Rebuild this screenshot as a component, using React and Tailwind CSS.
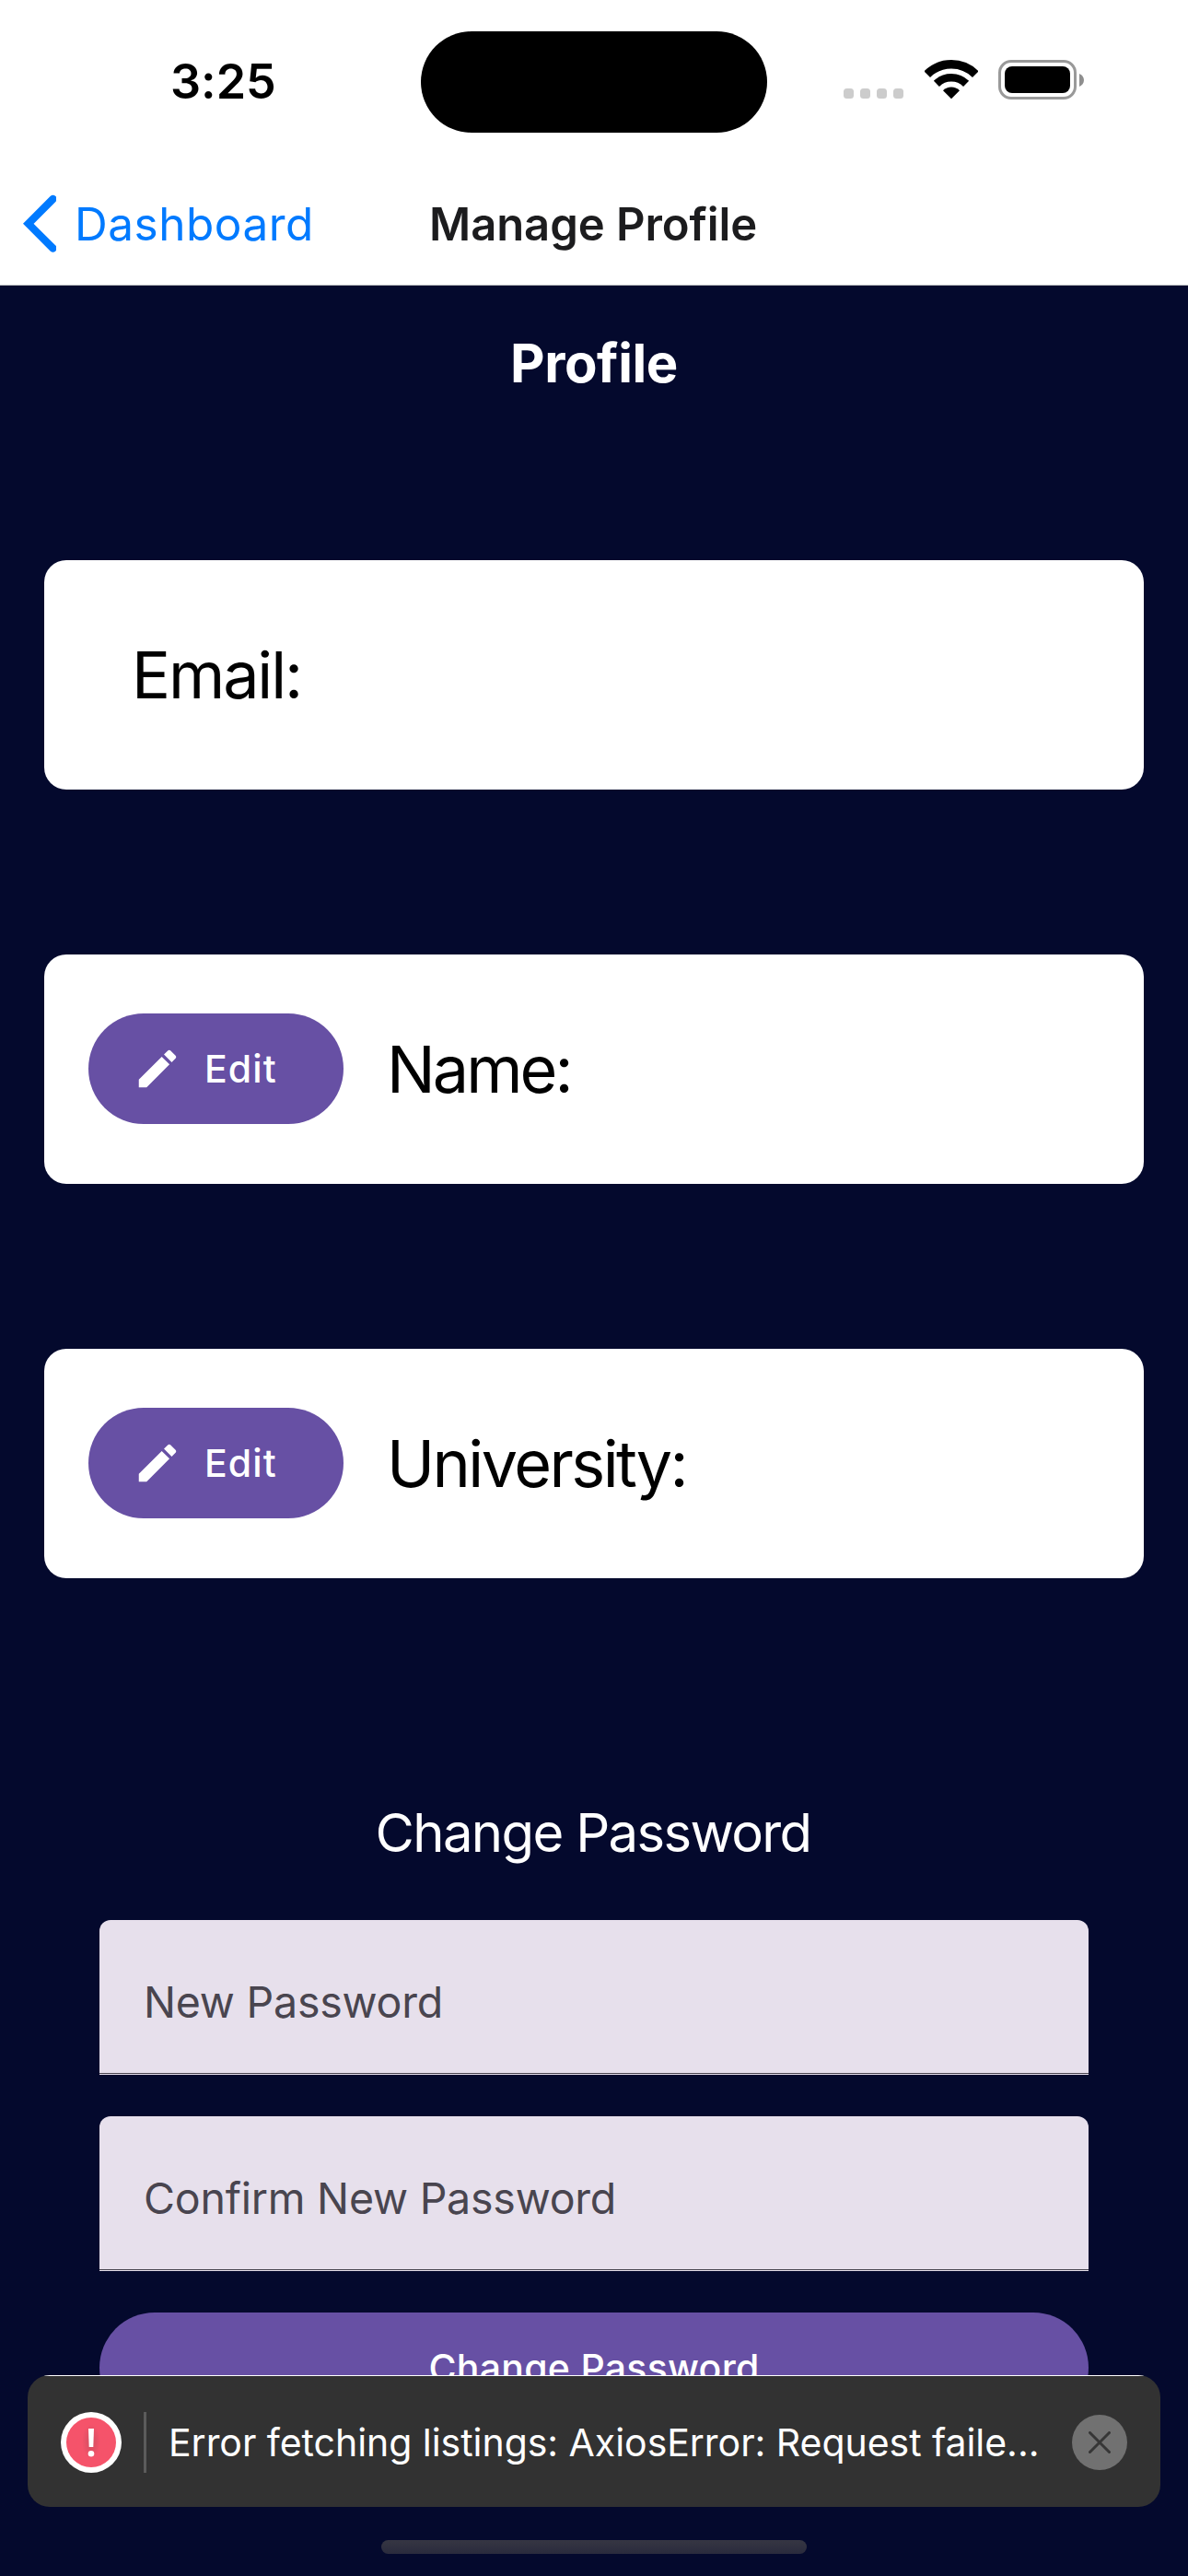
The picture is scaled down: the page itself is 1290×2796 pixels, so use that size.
function CellularDots() {
  return (
    <div className="mt-[26px] flex gap-[7px]">
      {[0, 1, 2, 3].map((i) => (
        <span key={i} className="size-[11px] rounded-[3.5px] bg-[#cccccc]" />
      ))}
    </div>
  );
}

function WifiIcon() {
  return (
    <svg width="58" height="43" viewBox="0 0 58 43" fill="none" className="ml-[23px] -mt-[4px]">
      <path d="M2.7 15.7A37.2 37.2 0 0 1 55.3 15.7" stroke="#000" strokeWidth="9.4" />
      <path d="M12.9 25.9A22.8 22.8 0 0 1 45.1 25.9" stroke="#000" strokeWidth="8.6" />
      <path d="M29 42.2L20 33.2A13 13 0 0 1 38 33.2Z" fill="#000" />
    </svg>
  );
}

function BatteryIcon() {
  return (
    <div className="ml-[22px] -mt-[4px] flex items-center gap-[3px]">
      <div className="h-[43px] w-[85px] rounded-[14px] border-[3px] border-[#999999] p-[4px]">
        <div className="h-full w-full rounded-[8px] bg-black" />
      </div>
      <svg width="5" height="14" viewBox="0 0 5 14">
        <path d="M0 0C3 1.2 5 3.8 5 7S3 12.8 0 14Z" fill="#8e8e8e" />
      </svg>
    </div>
  );
}

function StatusBar() {
  return (
    <div className="flex h-[177px] items-center">
      <div className="w-[457px] pl-[185px] text-[52px] font-semibold leading-none text-black">3:25</div>
      <div className="mt-px h-[110px] w-[376px] rounded-full bg-black" />
      <div className="ml-[83px] flex items-center">
        <CellularDots />
        <WifiIcon />
        <BatteryIcon />
      </div>
    </div>
  );
}

function NavBar() {
  return (
    <div className="flex h-[133px] items-center border-b border-[#b9bcc0]">
      <div className="flex w-[466px] items-center pl-[24px] text-[#007aff]">
        <svg width="37" height="64" viewBox="0 0 37 64" fill="none">
          <path d="M33.5 5L6.8 31.8L33.5 58.5" stroke="currentColor" strokeWidth="8.2" strokeLinecap="round" strokeLinejoin="miter" />
        </svg>
        <span className="ml-[20px] mt-[2px] text-[49.5px] leading-none tracking-[0.5px]">Dashboard</span>
      </div>
      <h1 className="text-[49px] font-semibold leading-none tracking-[-0.07px] text-[#1c1c1e]">Manage Profile</h1>
    </div>
  );
}

function EditButton() {
  return (
    <button className="mb-px flex h-[120px] w-[277px] items-center rounded-full bg-[#6750a4] pl-[48px] text-white">
      <svg width="54" height="54" viewBox="0 0 24 24" fill="currentColor">
        <path d="M20.71 7.04C21.1 6.65 21.1 6 20.71 5.63L18.37 3.29C18 2.9 17.35 2.9 16.96 3.29L15.12 5.12L18.87 8.87M3 17.25V21H6.75L17.81 9.93L14.06 6.18L3 17.25Z" />
      </svg>
      <span className="ml-[24px] text-[41px] font-medium leading-none tracking-[1.1px]">Edit</span>
    </button>
  );
}

function ProfileCard({ label, editable, labelClass }) {
  return (
    <div className="flex h-[249px] items-center rounded-[24px] bg-white px-[48px]">
      {editable && <EditButton />}
      <span className={`text-[70px] leading-none text-black ${labelClass}`}>{label}</span>
    </div>
  );
}

function PasswordField({ label }) {
  return (
    <div className="flex h-[168px] flex-col rounded-t-[12px] bg-[#e7e0ec]">
      <div className="flex flex-1 items-center pl-[48px] pt-[13px] text-[46.5px] leading-none tracking-[-0.22px] text-[#49454f]">
        {label}
      </div>
      <div className="mb-px h-px bg-[#49454f]" />
    </div>
  );
}

function Toast() {
  return (
    <div className="absolute left-[30px] top-[2578px] flex h-[143px] w-[1230px] items-center overflow-hidden rounded-[24px] bg-[#323232] pl-[36px] pt-[3px]">
      <div className="absolute left-[14px] right-[14px] top-0 h-px bg-white" />
      <svg width="66" height="66" viewBox="0 0 66 66">
        <defs>
          <radialGradient id="glow">
            <stop offset="0" stopColor="#d04d60" />
            <stop offset="1" stopColor="#f5536a" />
          </radialGradient>
        </defs>
        <circle cx="33" cy="33" r="33" fill="#fff" />
        <circle cx="33" cy="33" r="27" fill="#f5536a" />
        <ellipse cx="33" cy="32" rx="10" ry="19" fill="url(#glow)" />
        <path d="M30 18H36L35.3 38H30.7Z" fill="#fff" />
        <circle cx="33" cy="45.3" r="3.3" fill="#fff" />
      </svg>
      <div className="ml-[24px] h-[66px] w-[3px] bg-[#5b5b5b]" />
      <p className="ml-[24px] w-[981px] whitespace-nowrap text-[41px] leading-none tracking-[-0.04px] text-white">
        Error fetching listings: AxiosError: Request faile...
      </p>
      <button className="flex size-[60px] items-center justify-center rounded-full bg-[#717171]">
        <svg width="24" height="24" viewBox="0 0 24 24" fill="none">
          <path d="M1.5 1.5L22.5 22.5M22.5 1.5L1.5 22.5" stroke="#363636" strokeWidth="3" strokeLinecap="round" />
        </svg>
      </button>
    </div>
  );
}

export default function App() {
  return (
    <div className="relative h-[2796px] w-[1290px] overflow-hidden bg-[#04092d] font-['Inter',sans-serif] [font-variant-ligatures:none]">
      <header className="bg-white">
        <StatusBar />
        <NavBar />
      </header>

      <main>
        <h2 className="mt-[55px] text-center text-[58px] font-bold leading-none tracking-[-0.44px] text-white">Profile</h2>

        <div className="mt-[185px] flex flex-col gap-[179px] px-[48px]">
          <ProfileCard label="Email:" labelClass="ml-[47px] tracking-[-2.12px]" />
          <ProfileCard label="Name:" labelClass="ml-[47px] tracking-[-2.94px]" editable />
          <ProfileCard label="University:" labelClass="ml-[47px] tracking-[-2.55px]" editable />
        </div>

        <section className="mt-[247px] px-[108px]">
          <h3 className="pr-[2px] text-center text-[58px] leading-none tracking-[-1.65px] text-white">Change Password</h3>
          <div className="mt-[66px] flex flex-col gap-[45px]">
            <PasswordField label="New Password" />
            <PasswordField label="Confirm New Password" />
            <button className="h-[120px] rounded-full bg-[#6750a4] text-center text-[41px] font-medium leading-none tracking-[0.27px] text-white">
              Change Password
            </button>
          </div>
        </section>
      </main>

      <Toast />
      <div className="absolute left-[414px] top-[2757px] h-[15px] w-[462px] rounded-full bg-linear-to-b from-[#363643] to-[#2a2b3d]" />
    </div>
  );
}
